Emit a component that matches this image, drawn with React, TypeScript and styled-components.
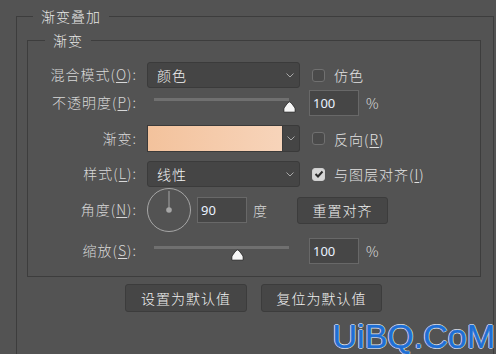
import React from 'react';
import styled, { createGlobalStyle } from 'styled-components';

const GlobalStyle = createGlobalStyle`
  html, body {
    margin: 0;
    padding: 0;
    background: #535353;
    overflow: hidden;
  }
  body {
    font-family: "Noto Sans CJK SC", "Noto Sans", sans-serif;
    font-weight: 300;
  }
`;

const Page = styled.div`
  position: relative;
  width: 496px;
  height: 354px;
  padding: 6px 0 0 16px;
  box-sizing: border-box;
  overflow: hidden;
`;

const Group = styled.fieldset<{ $w: number; $h: number; $mt?: number; $ml?: number }>`
  box-sizing: border-box;
  width: ${p => p.$w}px;
  height: ${p => p.$h}px;
  margin: ${p => p.$mt || 0}px 0 0 ${p => p.$ml || 0}px;
  padding: 0;
  min-width: 0;
  border: 1px solid #3d3d3d;
`;

const Legend = styled.legend<{ $ml: number }>`
  margin-left: ${p => p.$ml}px;
  padding: 0 8px;
  font-size: 14px;
  line-height: 20px;
  letter-spacing: 1px;
  color: #e6e6e6;
`;

const Row = styled.div<{ $top: number; $h: number }>`
  display: flex;
  align-items: center;
  height: ${p => p.$h}px;
  margin-top: ${p => p.$top}px;
`;

const Label = styled.div`
  width: 109px;
  margin-right: 10px;
  margin-top: -2px;
  text-align: right;
  font-size: 14px;
  line-height: 20px;
  letter-spacing: 1px;
  color: #d8d8d8;
  white-space: nowrap;
`;

const Key = styled.span`
  text-decoration: underline;
  text-underline-offset: 2px;
`;

const Select = styled.div`
  box-sizing: border-box;
  width: 153px;
  height: 26px;
  display: flex;
  align-items: center;
  justify-content: space-between;
  padding: 0 5px 0 9px;
  background: #454545;
  border: 1px solid #3b3b3b;
  border-radius: 3px;
  color: #f2f2f2;
  font-size: 14px;
  letter-spacing: 1px;
`;

const Check = styled.label`
  display: flex;
  align-items: center;
  margin-left: 12px;
  font-size: 14px;
  letter-spacing: 1px;
  color: #e2e2e2;
`;

const Box = styled.span<{ $on?: boolean }>`
  box-sizing: border-box;
  width: 13px;
  height: 13px;
  margin-right: 9px;
  border-radius: 3px;
  border: 1px solid ${p => (p.$on ? '#cfcfcf' : '#707070')};
  background: ${p => (p.$on ? '#d6d6d6' : '#4a4a4a')};
  display: flex;
  align-items: center;
  justify-content: center;
`;

const Slider = styled.div`
  position: relative;
  width: 153px;
  height: 26px;
`;

const Track = styled.div`
  height: 3px;
  margin: 8px 11px 0 7px;
  background: #707070;
`;

const Thumb = styled.svg`
  position: absolute;
  top: 11px;
  width: 13px;
  height: 12px;
  margin-left: -6.5px;
`;

const Field = styled.div<{ $ml: number }>`
  box-sizing: border-box;
  width: 50px;
  height: 26px;
  margin-left: ${p => p.$ml}px;
  padding-left: 3px;
  display: flex;
  align-items: center;
  background: #464646;
  border: 1px solid #686868;
  font-family: "Noto Sans", sans-serif;
  font-weight: 400;
  font-size: 13px;
  color: #eaf2ff;
`;

const Unit = styled.span<{ $ml: number }>`
  margin-left: ${p => p.$ml}px;
  font-size: 14px;
  color: #dadada;
`;

const Picker = styled.div`
  display: flex;
  width: 153px;
  height: 27px;
`;

const Swatch = styled.div`
  flex: 1;
  border: 1px solid #3a3a3a;
  background: linear-gradient(to right, #f3c29c, #f7d4ba);
`;

const Drop = styled.div`
  box-sizing: border-box;
  width: 17px;
  border: 1px solid #3a3a3a;
  border-left: none;
  border-radius: 0 3px 3px 0;
  background: #454545;
  display: flex;
  align-items: center;
  justify-content: center;
`;

const Button = styled.div<{ $w: number; $h: number; $ml?: number }>`
  box-sizing: border-box;
  width: ${p => p.$w}px;
  height: ${p => p.$h}px;
  margin-left: ${p => p.$ml || 0}px;
  display: flex;
  align-items: center;
  justify-content: center;
  background: #464646;
  border: 1px solid #3c3c3c;
  border-radius: 3px;
  color: #f0f0f0;
  font-size: 14px;
  letter-spacing: 1px;
`;

const Footer = styled.div`
  display: flex;
  gap: 14px;
  margin: 7px 0 0 108px;
`;

const Watermark = styled.div`
  position: absolute;
  right: 1px;
  bottom: 0px;
  font-family: "Liberation Sans", Arial, sans-serif;
  font-weight: 400;
  font-size: 34px;
  line-height: 36px;
  color: #1f6fd4;
  -webkit-text-stroke: 0.6px #1f6fd4;
  text-shadow: 0 0 1px #fff, 1px 0 0 #ddd, -1px 0 0 #ddd, 0 1px 0 #ddd, 0 -1px 0 #ddd;
`;

const Chevron = () => (
  <svg width="8" height="5" viewBox="0 0 8 5">
    <path d="M0.5 0.5 L4 4 L7.5 0.5" fill="none" stroke="#a8a8a8" strokeWidth="1" />
  </svg>
);

const SliderCtl = ({ value }: { value: number }) => (
  <Slider>
    <Track />
    <Thumb viewBox="0 0 13 12" style={{ left: `${7 + (135 * value) / 100}px` }}>
      <path
        d="M6.5 0.8 C7.5 0.8 12.2 6.5 12.2 8 V11.2 H0.8 V8 C0.8 6.5 5.5 0.8 6.5 0.8 Z"
        fill="#f6f6f6"
        stroke="#2e2e2e"
        strokeWidth="1"
      />
    </Thumb>
  </Slider>
);

const Dial = () => (
  <svg width="44" height="44" viewBox="0 0 44 44">
    <circle cx="22" cy="22" r="21.5" fill="none" stroke="#a6a6a6" strokeWidth="1" />
    <line x1="22" y1="3" x2="22" y2="22" stroke="#a6a6a6" strokeWidth="1" />
    <circle cx="22" cy="22" r="2.8" fill="#a6a6a6" />
  </svg>
);

export default function App() {
  return (
    <Page>
      <GlobalStyle />
      <Group $w={478} $h={420}>
        <Legend $ml={16}>渐变叠加</Legend>
        <Group $w={454} $h={247} $mt={4} $ml={10}>
          <Legend $ml={17}>渐变</Legend>

          <Row $top={12} $h={26}>
            <Label>混合模式(<Key>O</Key>):</Label>
            <Select>
              颜色
              <Chevron />
            </Select>
            <Check>
              <Box />
              仿色
            </Check>
          </Row>

          <Row $top={2} $h={26}>
            <Label>不透明度(<Key>P</Key>):</Label>
            <SliderCtl value={100} />
            <Field $ml={9}>100</Field>
            <Unit $ml={7}>%</Unit>
          </Row>

          <Row $top={9} $h={27}>
            <Label>渐变:</Label>
            <Picker>
              <Swatch />
              <Drop>
                <Chevron />
              </Drop>
            </Picker>
            <Check>
              <Box />
              反向(<Key>R</Key>)
            </Check>
          </Row>

          <Row $top={9} $h={26}>
            <Label>样式(<Key>L</Key>):</Label>
            <Select>
              线性
              <Chevron />
            </Select>
            <Check>
              <Box $on>
                <svg width="10" height="10" viewBox="0 0 10 10">
                  <path d="M1.5 5 L4 7.5 L8.5 2.5" fill="none" stroke="#2a2a2a" strokeWidth="2" />
                </svg>
              </Box>
              与图层对齐(<Key>I</Key>)
            </Check>
          </Row>

          <Row $top={1} $h={44}>
            <Label>角度(<Key>N</Key>):</Label>
            <Dial />
            <Field $ml={6}>90</Field>
            <Unit $ml={6}>度</Unit>
            <Button $w={91} $h={27} $ml={30}>重置对齐</Button>
          </Row>

          <Row $top={6} $h={26}>
            <Label>缩放(<Key>S</Key>):</Label>
            <SliderCtl value={61.5} />
            <Field $ml={9}>100</Field>
            <Unit $ml={7}>%</Unit>
          </Row>
        </Group>

        <Footer>
          <Button $w={122} $h={28}>设置为默认值</Button>
          <Button $w={121} $h={28}>复位为默认值</Button>
        </Footer>
      </Group>
      <Watermark>UiBQ.CoM</Watermark>
    </Page>
  );
}
